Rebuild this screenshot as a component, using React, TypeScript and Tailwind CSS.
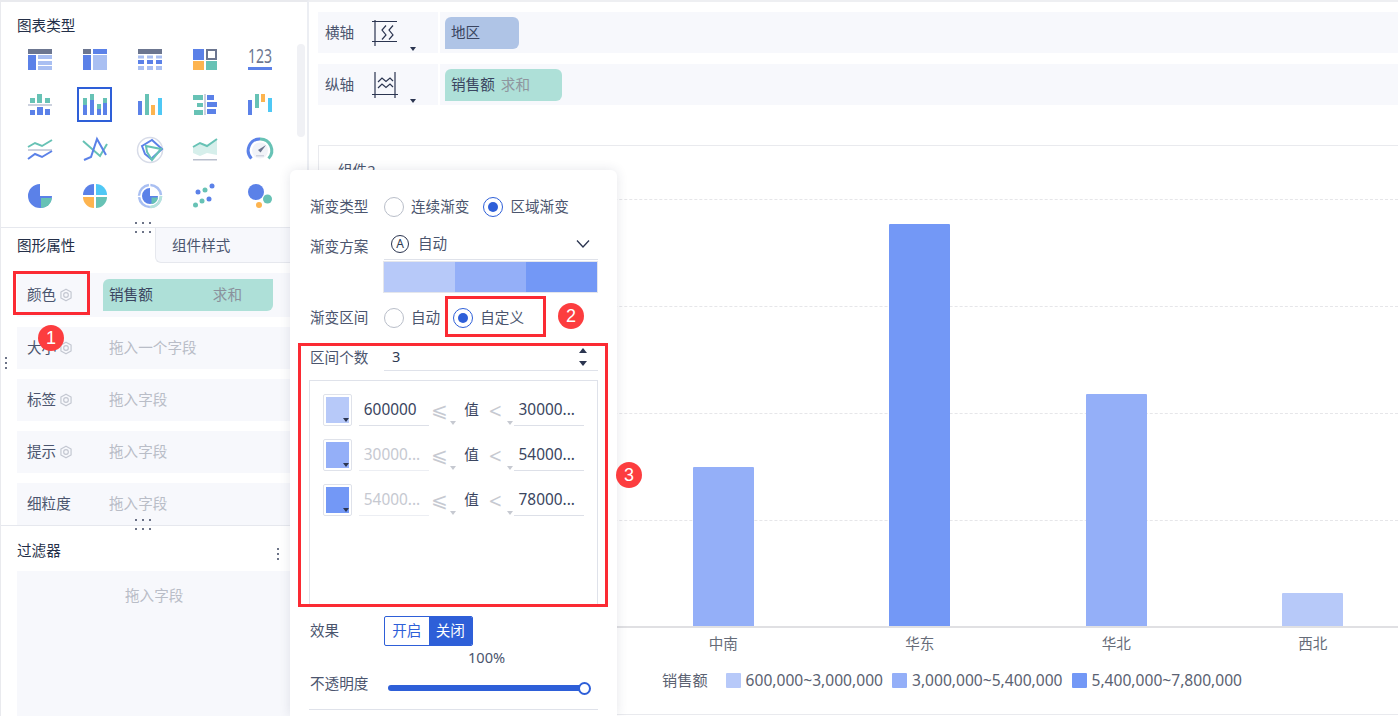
import React from "react";

const BLUE = "#5b81e8";
const TEAL = "#67c2b5";
const GRAY = "#6c7690";
const LIGHT = "#a9bff2";
const ORANGE = "#fdb44f";
const CYAN = "#4fc8f5";
const LINE = "#ccd1de";

const R = (x: number, y: number, w: number, h: number, fill: string) => (
  <rect x={x} y={y} width={w} height={h} fill={fill} />
);

const chartIcons: React.ReactNode[] = [
  <>
    {R(0, 0, 24, 5, GRAY)}
    {R(0, 6, 8, 15, BLUE)}
    {R(10, 6, 14, 4, LIGHT)}
    {R(10, 12, 14, 4, LIGHT)}
    {R(10, 17, 14, 4, LIGHT)}
  </>,
  <>
    {R(0, 0, 8, 5, GRAY)}
    {R(10, 0, 14, 5, BLUE)}
    {R(0, 6, 8, 15, BLUE)}
    {R(10, 6, 14, 15, LIGHT)}
  </>,
  <>
    {R(0, 0, 24, 5, GRAY)}
    {[0, 9, 18].map((x) => (
      <React.Fragment key={x}>
        {R(x, 6.5, 6, 3, LIGHT)}
        {R(x, 11, 6, 4, BLUE)}
        {R(x, 17, 6, 4, LIGHT)}
      </React.Fragment>
    ))}
  </>,
  <>
    {R(0, 0, 11, 11, BLUE)}
    <rect x="14" y="1" width="9" height="9" stroke={GRAY} strokeWidth="2" />
    {R(0, 12, 11, 9, ORANGE)}
    {R(13, 12, 11, 9, TEAL)}
  </>,
  <>
    <text x="0" y="14" textLength="24" lengthAdjust="spacingAndGlyphs" fontSize="19" fill={GRAY} fontFamily="Noto Sans">
      123
    </text>
    {R(0, 18, 24, 3, BLUE)}
  </>,
  <>
    {R(2, 4, 5, 5, TEAL)}
    {R(9, 0, 5, 9, TEAL)}
    {R(17, 4, 5, 5, TEAL)}
    {R(0, 10, 24, 2, LINE)}
    {R(2, 16, 5, 5, BLUE)}
    {R(9, 13, 6, 8, BLUE)}
    {R(17, 15, 5, 6, BLUE)}
  </>,
  <>
    {R(0, 4, 4, 7, TEAL)}
    {R(0, 11, 4, 10, BLUE)}
    {R(7, 0, 4, 6, TEAL)}
    {R(7, 6, 4, 15, BLUE)}
    {R(14, 10, 4, 5, TEAL)}
    {R(14, 15, 4, 6, BLUE)}
    {R(20, 4, 4, 5, TEAL)}
    {R(20, 9, 4, 12, BLUE)}
  </>,
  <>
    {R(0, 7, 4, 14, BLUE)}
    {R(7, 0, 4, 21, TEAL)}
    {R(13, 11, 4, 10, ORANGE)}
    {R(20, 4, 4, 17, CYAN)}
  </>,
  <>
    {R(0, 1, 10, 5, TEAL)}
    {R(4, 9, 6, 4, TEAL)}
    {R(1, 16, 9, 5, TEAL)}
    {R(11, 0, 2, 21, LINE)}
    {R(14, 1, 7, 5, BLUE)}
    {R(14, 8, 10, 5, BLUE)}
    {R(14, 15, 9, 5, BLUE)}
  </>,
  <>
    {R(0, 6, 4, 15, BLUE)}
    {R(7, 0, 4, 14, TEAL)}
    {R(13, 0, 4, 8, ORANGE)}
    {R(20, 4, 4, 14, CYAN)}
  </>,
  <>
    <polyline points="0,8 7,4 14,7 24,1" stroke={TEAL} strokeWidth="2" />
    {R(0, 10, 24, 2, LINE)}
    <polyline points="0,20 7,15 14,18 24,12" stroke={BLUE} strokeWidth="2" />
  </>,
  <>
    <polyline points="0,2 17,17 24,5" stroke={TEAL} strokeWidth="2" />
    <polyline points="1,21 8,18 14,0 23,16" stroke={BLUE} strokeWidth="2" />
  </>,
  <>
    <circle cx="12" cy="11" r="12.5" stroke="#d8dce8" strokeWidth="1.5" />
    <polygon points="4,7 14,1 24,10 13,20 7,15" stroke={BLUE} strokeWidth="2" />
    <polygon points="8,7 23,10 14,21 9,13" stroke={TEAL} strokeWidth="2" />
  </>,
  <>
    <polygon points="0,8 7,4 14,7 24,0 24,16 14,14 7,17 0,14" fill="#d6efeb" />
    <polyline points="0,8 7,4 14,7 24,0" stroke={TEAL} strokeWidth="2" />
    {R(0, 20, 24, 1.5, "#b9bfcd")}
  </>,
  <>
    <circle cx="12" cy="11.5" r="8" fill="#f1f3f8" />
    <path d="M3.5 19.5A11.5 11.5 0 0 1 12 0" stroke={BLUE} strokeWidth="3" />
    <path d="M12 0A11.5 11.5 0 0 1 20.5 19.5" stroke={TEAL} strokeWidth="3" />
    <path d="M10 11L18 6L12.5 13.5Z" fill={GRAY} />
    {R(8, 16, 8, 1.5, "#d0d4df")}
  </>,
  <>
    <path d="M12 0A12 12 0 1 0 24 12H12Z" fill={BLUE} />
    <path d="M13 14H24A11 11 0 0 1 13 24Z" fill={TEAL} />
  </>,
  <>
    <path d="M11 0V11H0A11 11 0 0 1 11 0Z" fill={BLUE} />
    <path d="M13 0A11 11 0 0 1 24 11H13Z" fill={CYAN} />
    <path d="M0 13H11V24A11 11 0 0 1 0 13Z" fill={ORANGE} />
    <path d="M13 13H24A11 11 0 0 1 13 24Z" fill={TEAL} />
  </>,
  <>
    <circle cx="12" cy="12" r="11" stroke={LIGHT} strokeWidth="2.5" strokeDasharray="15.8 1.5" />
    <path d="M23 12A11 11 0 0 1 12 23" stroke="#b6e3dc" strokeWidth="2.5" />
    <path d="M12 4A8 8 0 1 0 20 12H12Z" fill={BLUE} />
    <path d="M13.5 13.5H20A7 7 0 0 1 13.5 20Z" fill={TEAL} />
  </>,
  <>
    <circle cx="2.5" cy="21" r="2.5" fill={TEAL} />
    <circle cx="9" cy="17" r="2.5" fill={TEAL} />
    <circle cx="5" cy="8" r="2.5" fill={BLUE} />
    <circle cx="12" cy="6" r="2.5" fill={TEAL} />
    <circle cx="16" cy="15" r="2.5" fill={BLUE} />
    <circle cx="19" cy="2" r="2.5" fill={BLUE} />
  </>,
  <>
    <circle cx="8" cy="8" r="8" fill={BLUE} />
    <circle cx="19.5" cy="15" r="4.5" fill={TEAL} />
    <circle cx="11" cy="21" r="3" fill={ORANGE} />
  </>,
];

const Caret = ({ className }: { className: string }) => (
  <span className={`absolute border-x-[3px] border-t-[4px] border-x-transparent ${className}`} />
);

const Gear = () => (
  <svg width="14" height="14" viewBox="0 0 24 24" fill="none" stroke="#c3c7d1" strokeWidth="2">
    <path d="M12 2l8.7 5v10L12 22l-8.7-5V7z" strokeLinejoin="round" />
    <circle cx="12" cy="12" r="4" />
  </svg>
);

const DotGrid = ({ className }: { className: string }) => (
  <div className={`absolute grid grid-cols-3 gap-x-[5px] gap-y-[7px] ${className}`}>
    {[0, 1, 2, 3, 4, 5].map((i) => (
      <span key={i} className="h-[2px] w-[2px] rounded-full bg-[#3c4660]" />
    ))}
  </div>
);

const VDots = ({ className }: { className: string }) => (
  <div className={`absolute flex flex-col gap-[3px] ${className}`}>
    {[0, 1, 2].map((i) => (
      <span key={i} className="h-[2px] w-[2px] rounded-full bg-[#3c4660]" />
    ))}
  </div>
);

const FieldRow = ({ label, hint, gear = true }: { label: string; hint: string; gear?: boolean }) => (
  <div className="mt-[10px] flex h-[42px] items-center bg-[#f7f8fc] pl-[10px]">
    <div className="flex w-[82px] items-center gap-[3px] text-[#4b556e]">
      <span>{label}</span>
      {gear && <Gear />}
    </div>
    <span className="text-[#b9bdc7]">{hint}</span>
  </div>
);

const Radio = ({ on, label, gap = "mr-[14px]" }: { on?: boolean; label: string; gap?: string }) => (
  <div className={`flex items-center gap-[7px] ${gap}`}>
    <span
      className={`flex h-[20px] w-[20px] items-center justify-center rounded-full border ${
        on ? "border-[#2e5fd8]" : "border-[#b9bec9]"
      }`}
    >
      {on && <span className="h-[10px] w-[10px] rounded-full bg-[#2e5fd8]" />}
    </span>
    <span className="text-[#4b556e]">{label}</span>
  </div>
);

const RangeRow = ({
  color,
  from,
  to,
  muted,
}: {
  color: string;
  from: string;
  to: string;
  muted?: boolean;
}) => (
  <div className="mb-[13px] flex h-[32px] items-center text-[15.4px]">
    <div className="relative h-[32px] w-[29px] rounded-[2px] border border-[#dfe2ea] p-[2px]">
      <div className={`h-full w-full ${color}`} />
      <Caret className="right-[2px] bottom-[3px] border-t-[#2b3550]" />
    </div>
    <div
      className={`ml-[7px] flex h-[32px] w-[71px] items-center border-b pl-[5px] ${
        muted ? "border-[#eceef3] text-[#c6c9d1]" : "border-[#dde0e8] text-[#3a4560]"
      }`}
    >
      {from}
    </div>
    <div className="relative flex h-[32px] w-[85px] items-center text-[#3a4560]">
      <span className="w-[20px] text-center text-[20px] leading-none text-[#c6c9d1]">⩽</span>
      <span className="ml-[15px] text-[14.6px]">值</span>
      <span className="ml-[10px] text-[22px] leading-none text-[#c6c9d1]">&lt;</span>
      <Caret className="top-[27px] left-[21px] border-t-[#c6c9d1]" />
      <Caret className="top-[27px] left-[78px] border-t-[#c6c9d1]" />
    </div>
    <div className="flex h-[32px] w-[71px] items-center border-b border-[#dde0e8] pl-[5px] text-[#3a4560]">{to}</div>
  </div>
);

const Bar = ({ h, color }: { h: string; color: string }) => (
  <div className="flex w-[196.5px] shrink-0 justify-center">
    <div className={`w-[61px] rounded-t-[1px] ${h} ${color}`} />
  </div>
);

const Legend = ({ color, label }: { color: string; label: string }) => (
  <div className="flex items-center gap-[5px]">
    <span className={`h-[15px] w-[15px] rounded-[1px] ${color}`} />
    <span>{label}</span>
  </div>
);

const AxisRow = ({
  label,
  icon,
  children,
}: {
  label: string;
  icon: React.ReactNode;
  children: React.ReactNode;
}) => (
  <div className="flex h-[41px] bg-[#f7f8fc]">
    <div className="relative flex w-[118px] items-center pl-[7px] text-[#4b556e]">
      <span>{label}</span>
      <span className="ml-[18px]">{icon}</span>
      <Caret className="right-[20px] bottom-[2px] border-t-[#2b3550]" />
    </div>
    <div className="ml-[2px] flex flex-1 items-center border-l-2 border-white pl-[5px]">{children}</div>
  </div>
);

export default function App() {
  return (
    <div className="relative flex h-[716px] w-[1398px] overflow-hidden bg-white font-['Noto_Sans','Noto_Sans_CJK_SC',sans-serif] text-[14.6px] text-[#2e3a52]">
      {/* left panel */}
      <aside className="relative flex w-[309px] shrink-0 flex-col border-t-2 border-r-2 border-l border-t-[#e9eaee] border-r-[#eceef3] border-l-[#e9eaee]">
        <div className="h-[226px] shrink-0 border-b border-[#e6e8ee]">
          <div className="pt-[12px] pl-[16px] leading-[22px] text-[#242f48]">图表类型</div>
          <div className="mt-[1px] ml-[11px] grid w-[275px] grid-cols-5">
            {chartIcons.map((icon, i) => (
              <div key={i} className="flex h-[45px] items-center justify-center">
                <div
                  className={`flex h-[35px] w-[35px] shrink-0 items-center justify-center ${
                    i === 6 ? "border-2 border-[#2e5fd8]" : ""
                  }`}
                >
                  <svg className="shrink-0 overflow-visible" width="26" height="26" viewBox="0 0 26 26" fill="none">
                    <g transform="translate(1 2)">{icon}</g>
                  </svg>
                </div>
              </div>
            ))}
          </div>
          <div className="absolute top-[42px] right-[2px] h-[93px] w-[8px] rounded-full bg-[#f0f1f5]" />
        </div>
        <DotGrid className="top-[220px] left-[134px]" />

        <div className="flex h-[35px] shrink-0">
          <div className="flex w-[154px] items-center pt-[1px] pl-[16px] text-[#242f48]">图形属性</div>
          <div className="flex flex-1 items-center rounded-bl-md border-b border-l border-[#e6e8ee] bg-[#f7f8fc] pt-[1px] pl-[16px] text-[#4b556e]">
            组件样式
          </div>
        </div>
        <div className="h-[263px] shrink-0 overflow-hidden border-b border-[#e6e8ee] pl-[16px]">
          <div className="mt-[10px] flex h-[44px] items-center bg-[#f7f8fc] pl-[10px]">
            <div className="flex w-[76px] items-center gap-[3px] text-[#4b556e]">
              <span>颜色</span>
              <Gear />
            </div>
            <div className="flex h-[32px] w-[170px] items-center justify-between rounded-tl-md rounded-br-md bg-[#aee0d8] pr-[31px] pl-[6px]">
              <span className="text-[#3a4560]">销售额</span>
              <span className="text-[#8a919c]">求和</span>
            </div>
          </div>
          <FieldRow label="大小" hint="拖入一个字段" />
          <FieldRow label="标签" hint="拖入字段" />
          <FieldRow label="提示" hint="拖入字段" />
          <FieldRow label="细粒度" hint="拖入字段" gear={false} />
        </div>
        <DotGrid className="top-[517px] left-[134px]" />
        <VDots className="top-[355px] left-[4px]" />

        <div className="flex flex-1 flex-col px-[16px]">
          <div className="flex h-[45px] shrink-0 items-center justify-between pt-[5px] pr-[9px] text-[#242f48]">
            <span>过滤器</span>
            <VDots className="top-[546px] left-[276px]" />
          </div>
          <div className="flex-1 bg-[#f7f8fc] pt-[14px] pl-[108px] text-[#b9bdc7]">拖入字段</div>
        </div>
      </aside>

      {/* right side */}
      <main className="flex min-w-0 flex-1 flex-col border-t-2 border-t-[#eeeff2]">
        <div className="flex flex-col gap-[11px] pt-[10px] pl-[9px]">
          <AxisRow
            label="横轴"
            icon={
              <svg width="26" height="26" viewBox="0 0 26 26" fill="none" stroke="#2b3550" strokeWidth="1.2">
                <path d="M3 0V26M0 1.5H25M0 21.5H25M14 5.5L10 10L14 15L10 19.5M21 5.5L17 10L21 15L17 19.5" />
              </svg>
            }
          >
            <div className="flex h-[32px] w-[74px] items-center rounded-tl-md rounded-r-md bg-[#afc4e6] pl-[6px] text-[#3a4560]">
              地区
            </div>
          </AxisRow>
          <AxisRow
            label="纵轴"
            icon={
              <svg width="26" height="26" viewBox="0 0 26 26" fill="none" stroke="#2b3550" strokeWidth="1.2">
                <path d="M3 0V26M23 0V26M0 22.5H26M6 10L10 6L14 9.5L18 6L21 9M6 16L10 12L14 15.5L18 12L21 15" />
              </svg>
            }
          >
            <div className="flex h-[32px] w-[117px] items-center gap-[6px] rounded-tl-md rounded-r-md bg-[#aee0d8] pl-[6px]">
              <span className="text-[#3a4560]">销售额</span>
              <span className="text-[#8f959e]">求和</span>
            </div>
          </AxisRow>
        </div>

        <section className="mt-[40px] ml-[9px] flex h-[570px] flex-col border-y border-l border-[#e9eaee] pl-[19px]">
          <div className="pt-[14px] leading-[20px] text-[#4b556e]">组件2</div>
          <div className="relative -ml-[19px] flex h-[448px] shrink-0 items-end border-b-2 border-[#e0e0e3] pl-[306px]">
            <div className="absolute inset-x-0 top-[19px] flex flex-col">
              {[0, 1, 2, 3].map((i) => (
                <div key={i} className="h-[107px] border-t border-dashed border-[#e6e6e9]" />
              ))}
            </div>
            <div className="relative flex items-end">
              <Bar h="h-[159px]" color="bg-[#94aff8]" />
              <Bar h="h-[402px]" color="bg-[#7398f6]" />
              <Bar h="h-[232px]" color="bg-[#94aff8]" />
              <Bar h="h-[33px]" color="bg-[#b7c9f9]" />
            </div>
          </div>
          <div className="-ml-[19px] flex pt-[4px] pl-[306px] leading-[22px] text-[#666c78]">
            {["中南", "华东", "华北", "西北"].map((n) => (
              <div key={n} className="w-[196.5px] shrink-0 text-center">
                {n}
              </div>
            ))}
          </div>
          <div className="mt-[15px] flex items-center gap-[9px] pl-[324px] text-[15.6px] leading-[22px] text-[#5b6272]">
            <span className="mr-[9px] text-[15.2px]">销售额</span>
            <Legend color="bg-[#b7c9f9]" label="600,000~3,000,000" />
            <Legend color="bg-[#94aff8]" label="3,000,000~5,400,000" />
            <Legend color="bg-[#7398f6]" label="5,400,000~7,800,000" />
          </div>
        </section>
      </main>

      {/* gradient settings popover */}
      <div className="absolute top-[170px] left-[290px] h-[546px] w-[327px] rounded-t-md bg-white px-[19px] pt-[26px] shadow-[0_0_12px_rgba(40,50,80,0.12)]">
        <div className="flex h-[22px] items-center">
          <span className="w-[75px] pl-px text-[#4b556e]">渐变类型</span>
          <Radio label="连续渐变" />
          <Radio on label="区域渐变" />
        </div>
        <div className="mt-[10px] flex h-[32px] items-center">
          <span className="mt-[5px] w-[75px] pl-px text-[#4b556e]">渐变方案</span>
          <div className="flex h-[32px] flex-1 items-center border-b border-[#dfe2ea] pl-[7px]">
            <span className="flex h-[18px] w-[18px] items-center justify-center rounded-full border border-[#2b3550] text-[12px] leading-none">
              A
            </span>
            <span className="ml-[9px] text-[#4b556e]">自动</span>
            <svg className="mr-[7px] ml-auto" width="16" height="10" viewBox="0 0 16 10" fill="none" stroke="#2b3550" strokeWidth="1.3">
              <path d="M2 1.5L8 8L14 1.5" />
            </svg>
          </div>
        </div>
        <div className="mt-[1px] ml-[74px] flex h-[32px] border border-[#e4e6ec]">
          <div className="flex-1 bg-[#b7c9f9]" />
          <div className="flex-1 bg-[#94aff8]" />
          <div className="flex-1 bg-[#7398f6]" />
        </div>
        <div className="mt-[14px] flex h-[22px] items-center">
          <span className="w-[75px] pl-px text-[#4b556e]">渐变区间</span>
          <Radio label="自动" gap="mr-[13px]" />
          <Radio on label="自定义" />
        </div>
        <div className="mt-[10px] flex h-[32px] items-center">
          <span className="mt-[5px] w-[75px] pl-px text-[#4b556e]">区间个数</span>
          <div className="relative flex h-[32px] flex-1 items-center border-b border-[#dfe2ea] pt-[5px] pl-[8px]">
            3
            <span className="absolute top-[9px] right-[11px] border-x-[4px] border-b-[5px] border-x-transparent border-b-[#2b3550]" />
            <span className="absolute top-[22px] right-[11px] border-x-[4px] border-t-[5px] border-x-transparent border-t-[#2b3550]" />
          </div>
        </div>
        <div className="mt-[9px] h-[225px] border border-[#dfe2ea] px-[13px] pt-[13px]">
          <RangeRow color="bg-[#b7c9f9]" from="600000" to="30000..." />
          <RangeRow color="bg-[#94aff8]" from="30000..." to="54000..." muted />
          <RangeRow color="bg-[#7398f6]" from="54000..." to="78000..." muted />
        </div>
        <div className="mt-[11px] flex h-[30px] items-center">
          <span className="w-[75px] pl-px text-[#4b556e]">效果</span>
          <div className="flex h-[30px] w-[89px] overflow-hidden rounded-[2px] border border-[#2e5fd8]">
            <span className="flex flex-1 items-center justify-center text-[#2e5fd8]">开启</span>
            <span className="flex flex-1 items-center justify-center bg-[#2e5fd8] text-white">关闭</span>
          </div>
        </div>
        <div className="mt-[1px] h-[20px] pl-[159px] leading-[20px] text-[#4b556e]">100%</div>
        <div className="mt-[6px] flex h-[22px] items-center">
          <span className="w-[79px] pl-px text-[#4b556e]">不透明度</span>
          <div className="relative mt-[8px] h-[6px] w-[196px] rounded-full bg-[#2e5fd8]">
            <span className="absolute -top-[3.5px] -right-[7px] h-[13px] w-[13px] rounded-full border-2 border-[#2e5fd8] bg-white" />
          </div>
        </div>
        <div className="mt-[14px] border-t border-[#dfe2ea]" />
      </div>

      {/* red annotations */}
      <div className="absolute top-[271px] left-[13px] h-[44px] w-[77px] border-[3px] border-[#fb2a33]" />
      <div className="absolute top-[296px] left-[445px] h-[41px] w-[101px] border-[3px] border-[#fb2a33]" />
      <div className="absolute top-[343px] left-[298px] h-[264px] w-[310px] border-[3px] border-[#fb2a33]" />
      {[
        { n: "1", cls: "top-[325px] left-[38px]" },
        { n: "2", cls: "top-[303px] left-[558px]" },
        { n: "3", cls: "top-[462px] left-[616px]" },
      ].map((b) => (
        <div
          key={b.n}
          className={`absolute flex h-[26px] w-[26px] items-center justify-center rounded-full bg-[#fc3d3f] font-['Liberation_Sans',sans-serif] text-[18px] font-medium text-white ${b.cls}`}
        >
          {b.n}
        </div>
      ))}
    </div>
  );
}
